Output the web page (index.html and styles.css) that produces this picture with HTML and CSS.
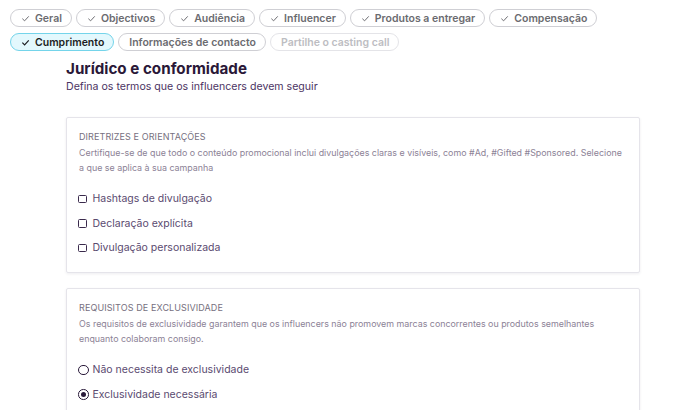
FILE: index.html
```html
<!DOCTYPE html>
<html lang="pt">
<head>
  <meta charset="UTF-8" />
  <meta name="viewport" content="width=device-width, initial-scale=1.0"/>
  <title>Jurídico e conformidade</title>
  <link rel="stylesheet" href="styles.css">
</head>
<body>

  <!-- Steps -->
  <div class="steps">
    <span class="step done"><svg viewBox="0 0 10 10"><path d="M1.5 5.2 L4 7.6 L8.6 2.6"/></svg>Geral</span>
    <span class="step done"><svg viewBox="0 0 10 10"><path d="M1.5 5.2 L4 7.6 L8.6 2.6"/></svg>Objectivos</span>
    <span class="step done"><svg viewBox="0 0 10 10"><path d="M1.5 5.2 L4 7.6 L8.6 2.6"/></svg>Audiência</span>
    <span class="step done"><svg viewBox="0 0 10 10"><path d="M1.5 5.2 L4 7.6 L8.6 2.6"/></svg>Influencer</span>
    <span class="step done"><svg viewBox="0 0 10 10"><path d="M1.5 5.2 L4 7.6 L8.6 2.6"/></svg>Produtos a entregar</span>
    <span class="step done"><svg viewBox="0 0 10 10"><path d="M1.5 5.2 L4 7.6 L8.6 2.6"/></svg>Compensação</span>
    <span class="step active"><svg viewBox="0 0 10 10"><path d="M1.5 5.2 L4 7.6 L8.6 2.6"/></svg>Cumprimento</span>
    <span class="step">Informações de contacto</span>
    <span class="step disabled">Partilhe o casting call</span>
  </div>

  <div class="content">
    <h1>Jurídico e conformidade</h1>
    <p class="subtitle">Defina os termos que os influencers devem seguir</p>

    <div class="card">
      <div class="card-title">DIRETRIZES E ORIENTAÇÕES</div>
      <p class="card-desc">Certifique-se de que todo o conteúdo promocional inclui divulgações claras e visíveis, como #Ad, #Gifted #Sponsored. Selecione a que se aplica à sua campanha</p>
      <div class="options">
        <label class="option"><span class="box"></span>Hashtags de divulgação</label>
        <label class="option"><span class="box"></span>Declaração explícita</label>
        <label class="option"><span class="box"></span>Divulgação personalizada</label>
      </div>
    </div>

    <div class="card">
      <div class="card-title">REQUISITOS DE EXCLUSIVIDADE</div>
      <p class="card-desc">Os requisitos de exclusividade garantem que os influencers não promovem marcas concorrentes ou produtos semelhantes enquanto colaboram consigo.</p>
      <div class="options">
        <label class="option radio-option"><span class="radio"></span>Não necessita de exclusividade</label>
        <label class="option radio-option"><span class="radio checked"></span>Exclusividade necessária</label>
      </div>
    </div>
  </div>

</body>
</html>
```

FILE: styles.css
```css
body { margin: 0; font-family: Inter, "Noto Sans", sans-serif; background: #fff; color: #2b1b3d; }
.steps { display: flex; flex-wrap: wrap; gap: 6px 4px; padding: 9px 10px 0 10px; width: 600px; }
.step { display: inline-flex; align-items: center; gap: 5px; height: 16px; padding: 0 9px 0 10px; border: 1px solid #cfcfd4; border-radius: 10px; font-size: 10.5px; font-weight: 600; color: #6b6b70; }
.step svg { width: 9px; height: 9px; fill: none; stroke: #6b6b70; stroke-width: 1.1; }
.step.active { background: #e3f8fd; border-color: #74d4ea; color: #1d1d22; }
.step.active svg { stroke: #1d1d22; stroke-width: 1.3; }
.step.disabled { color: #bdbdc2; border-color: #e4e4e8; }
.content { padding: 8px 48px 0 66px; }
h1 { margin: 0; font-size: 15.2px; font-weight: 700; color: #2a1838; line-height: 20px; }
.subtitle { margin: 0; font-size: 10.6px; color: #4c3463; line-height: 15px; }
.card { border: 1px solid #e5e4ea; border-radius: 2px; box-shadow: 0 1px 3px rgba(40,30,70,0.08); padding: 12px 13px 16px 12px; margin-top: 23px; }
.card + .card { margin-top: 15px; }
.card-title { font-size: 9px; color: #76707e; letter-spacing: 0.1px; line-height: 13px; }
.card-desc { margin: 2px 0 0 0; font-size: 8.9px; color: #8c8296; line-height: 15px; }
.options { display: flex; flex-direction: column; gap: 8.5px; margin-top: 16px; }
.option { display: flex; align-items: center; gap: 6px; margin-left: -1px; font-size: 10.5px; color: #5a4a70; line-height: 16px; }
.box { width: 6.5px; height: 6.5px; border: 1.2px solid #3a2a4c; border-radius: 1.5px; }
.radio-option { gap: 4px; }
.radio { width: 8.5px; height: 8.5px; border: 1.2px solid #2a1a3a; border-radius: 50%; display: flex; align-items: center; justify-content: center; }
.radio.checked::after { content: ""; width: 5px; height: 5px; border-radius: 50%; background: #2a1a3a; }
```
